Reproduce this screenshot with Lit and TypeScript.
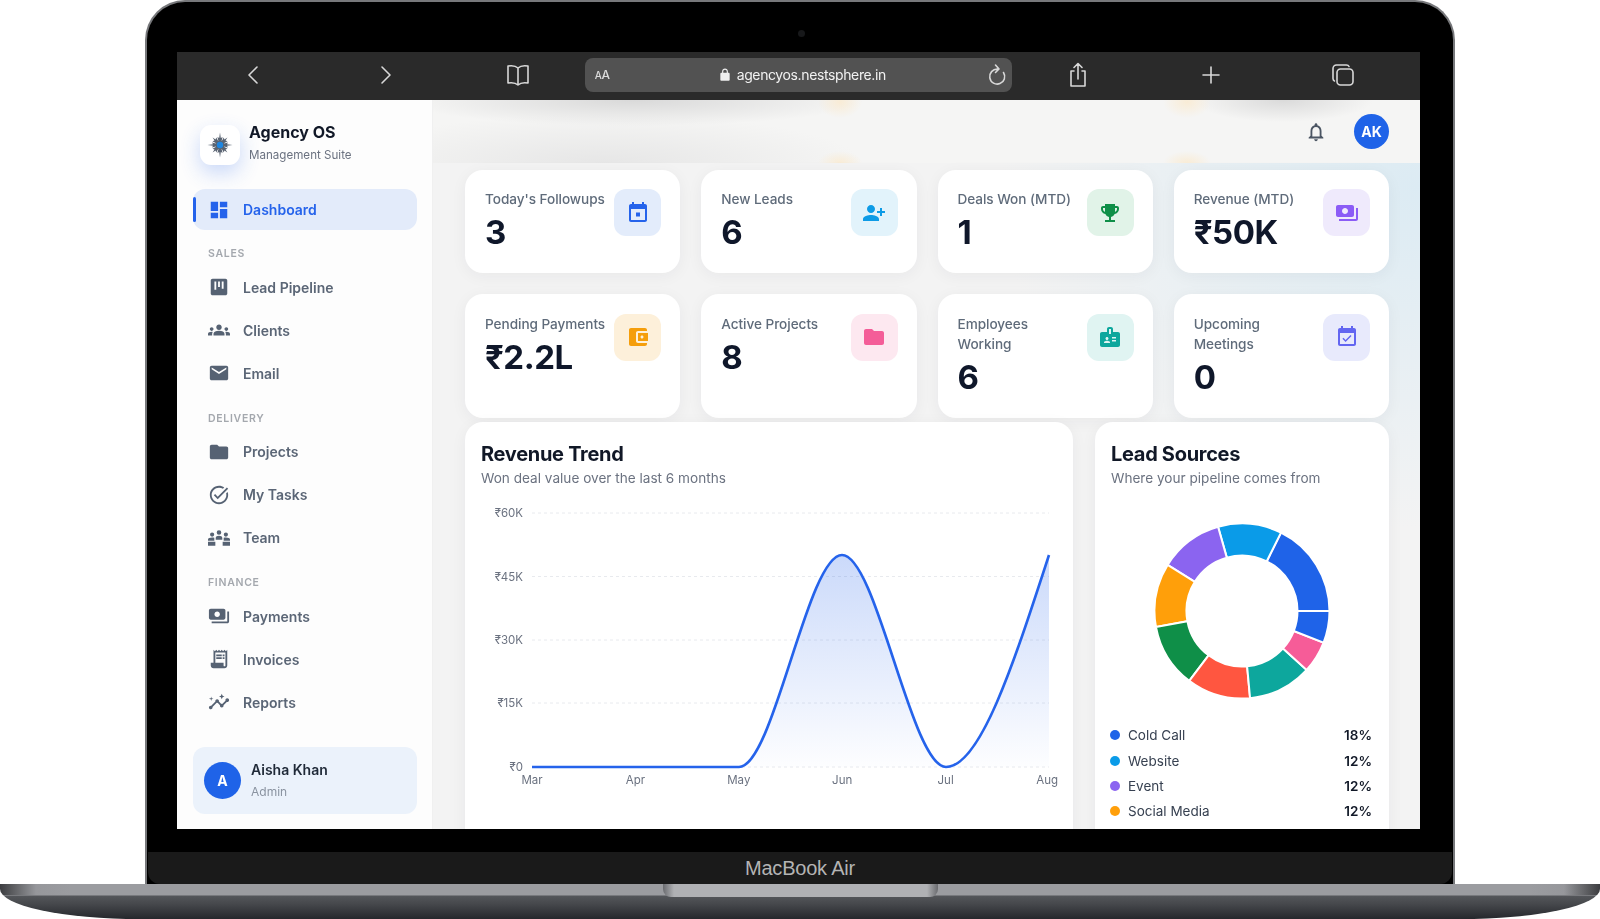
import { LitElement, html, css, svg } from 'lit';
import { customElement } from 'lit/decorators.js';

// material style glyphs, 24 box
const ICONS: Record<string, string> = {
  dashboard: 'M3 13h8V3H3v10zm0 8h8v-6H3v6zm10 0h8V11h-8v10zm0-18v6h8V3h-8z',
  kanban: 'M19 3H5c-1.1 0-2 .9-2 2v14c0 1.1.9 2 2 2h14c1.1 0 2-.9 2-2V5c0-1.1-.9-2-2-2zM9 15H7V6h2v9zm4-3h-2V6h2v6zm4 2h-2V6h2v8z',
  groups: 'M12 12.75c1.63 0 3.07.39 4.24.9 1.08.48 1.76 1.56 1.76 2.73V18H6v-1.61c0-1.18.68-2.26 1.76-2.73 1.17-.52 2.61-.91 4.24-.91zM4 13c1.1 0 2-.9 2-2s-.9-2-2-2-2 .9-2 2 .9 2 2 2zm1.13 1.1c-.37-.06-.74-.1-1.13-.1-.99 0-1.93.21-2.78.58C.48 14.9 0 15.62 0 16.43V18h4.5v-1.61c0-.83.23-1.61.63-2.29zM20 13c1.1 0 2-.9 2-2s-.9-2-2-2-2 .9-2 2 .9 2 2 2zm4 3.43c0-.81-.48-1.53-1.22-1.85-.85-.37-1.79-.58-2.78-.58-.39 0-.76.04-1.13.1.4.68.63 1.46.63 2.29V18H24v-1.57zM12 6c1.66 0 3 1.34 3 3s-1.34 3-3 3-3-1.34-3-3 1.34-3 3-3z',
  mail: 'M20 4H4c-1.1 0-1.99.9-1.99 2L2 18c0 1.1.9 2 2 2h16c1.1 0 2-.9 2-2V6c0-1.1-.9-2-2-2zm0 4l-8 5-8-5V6l8 5 8-5v2z',
  folder: 'M10 4H4c-1.1 0-1.99.9-1.99 2L2 18c0 1.1.9 2 2 2h16c1.1 0 2-.9 2-2V8c0-1.1-.9-2-2-2h-8l-2-2z',
  task: 'M22 5.18L10.59 16.6l-4.24-4.24 1.41-1.41 2.83 2.83 10-10L22 5.18zm-2.21 5.04c.13.57.21 1.17.21 1.78 0 4.42-3.58 8-8 8s-8-3.58-8-8 3.58-8 8-8c1.58 0 3.04.46 4.28 1.25l1.44-1.44C16.1 2.67 14.13 2 12 2 6.48 2 2 6.48 2 12s4.48 10 10 10 10-4.48 10-10c0-1.19-.22-2.33-.6-3.39l-1.61 1.61z',
  team: 'M12 3.5a2.5 2.5 0 1 1 0 5 2.5 2.5 0 0 1 0-5zM4.5 6a2.3 2.3 0 1 1 0 4.6 2.3 2.3 0 0 1 0-4.6zm15 0a2.3 2.3 0 1 1 0 4.6 2.3 2.3 0 0 1 0-4.6zM12 9.5c2 0 3.6 1 3.6 2.4V14H8.400v-2.100c0-1.400 1.600-2.400 3.600-2.400zM0 13.500c0-1.300 2-2.100 4.500-2.100.9 0 1.700.1 2.400.3v3.300H0v-1.500zm24 0c0-1.300-2-2.100-4.500-2.100-.9 0-1.700.1-2.400.3v3.300H24v-1.500zM0 16h24v4.500H0V16zm8 0v4.500h8V16H8z',
  payments: 'M19 14V6c0-1.1-.9-2-2-2H3c-1.1 0-2 .9-2 2v8c0 1.1.9 2 2 2h14c1.1 0 2-.9 2-2zm-9-1c-1.660 0-3-1.340-3-3s1.340-3 3-3 3 1.340 3 3-1.340 3-3 3zm13-6v11c0 1.100-.9 2-2 2H4v-2h17V7h2z',
  receipt: 'M19.500 3.500L18 2l-1.500 1.500L15 2l-1.500 1.500L12 2l-1.500 1.500L9 2 7.500 3.500 6 2v14H3v3c0 1.660 1.340 3 3 3h12c1.660 0 3-1.340 3-3V2l-1.500 1.500zM19 19c0 .55-.45 1-1 1s-1-.45-1-1v-3H8V5h11v14zM9 7h6v2H9zM16 7h2v2h-2zM9 10h6v2H9zM16 10h2v2h-2z',
  insights: 'M21 8c-1.450 0-2.260 1.440-1.930 2.510l-3.550 3.560c-.3-.09-.74-.09-1.040 0l-2.550-2.550C12.270 10.450 11.460 9 10 9c-1.450 0-2.270 1.440-1.930 2.520l-4.560 4.550C2.440 15.740 1 16.550 1 18c0 1.100.9 2 2 2 1.450 0 2.260-1.440 1.930-2.510l4.550-4.560c.3.09.74.09 1.040 0l2.550 2.550C12.730 16.550 13.540 18 15 18c1.450 0 2.270-1.440 1.930-2.520l3.560-3.550c1.070.33 2.510-.48 2.510-1.930 0-1.100-.9-2-2-2zM15 9l.94-2.070L18 6l-2.060-.93L15 3l-.92 2.070L12 6l2.080.93zM3.500 11L4 9l2-.5L4 8l-.5-2L3 8l-2 .5L3 9z',
  event: 'M16 1v2H8V1H6v2H5c-1.110 0-1.990.9-1.990 2L3 19c0 1.100.89 2 2 2h14c1.100 0 2-.9 2-2V5c0-1.100-.9-2-2-2h-1V1h-2zm3 18H5V8h14v11zM10 11.500h4v4h-4z',
  personAdd: 'M9 12c2.210 0 4-1.790 4-4s-1.790-4-4-4-4 1.790-4 4 1.790 4 4 4zm9-2V7h2v3h3v2h-3v3h-2v-3h-3v-2h3zM9 14c2.670 0 8 1.340 8 4v2H1v-2c0-2.660 5.330-4 8-4z',
  trophy: 'M19 5h-2V3H7v2H5c-1.100 0-2 .9-2 2v1c0 2.550 1.920 4.630 4.390 4.940.63 1.500 1.980 2.630 3.610 2.960V19H7v2h10v-2h-4v-3.100c1.630-.33 2.980-1.460 3.610-2.960C19.080 12.630 21 10.550 21 8V7c0-1.100-.9-2-2-2zM5 8V7h2v3.820C5.840 10.400 5 9.300 5 8zm14 0c0 1.300-.84 2.400-2 2.820V7h2v1z',
  wallet: 'M21 18v1c0 1.100-.9 2-2 2H5c-1.110 0-2-.9-2-2V5c0-1.100.89-2 2-2h14c1.100 0 2 .9 2 2v1h-9c-1.110 0-2 .9-2 2v8c0 1.100.89 2 2 2h9zm-9-2h10V8H12v8zm4-2.500c-.83 0-1.500-.67-1.500-1.500s.67-1.500 1.500-1.500 1.500.67 1.500 1.500-.67 1.500-1.500 1.500z',
  badge: 'M20 7h-5V4c0-1.100-.9-2-2-2h-2c-1.100 0-2 .9-2 2v3H4c-1.100 0-2 .9-2 2v11c0 1.100.9 2 2 2h16c1.100 0 2-.9 2-2V9c0-1.100-.9-2-2-2zM9 12c.83 0 1.500.67 1.500 1.500S9.830 15 9 15s-1.500-.67-1.500-1.500S8.170 12 9 12zm3 6H6v-.75c0-1 2-1.500 3-1.500s3 .5 3 1.500V18zm1-9h-2V4h2v5zm5 7.500h-4V15h4v1.500zm0-3h-4V12h4v1.500z',
  eventOk: 'M16.530 11.060L15.470 10l-4.880 4.880-2.120-2.120-1.060 1.060L10.590 17l5.940-5.940zM19 3h-1V1h-2v2H8V1H6v2H5c-1.110 0-1.990.9-1.990 2L3 19c0 1.100.89 2 2 2h14c1.100 0 2-.9 2-2V5c0-1.100-.9-2-2-2zm0 16H5V8h14v11z',
  bell: 'M12 22c1.100 0 2-.9 2-2h-4c0 1.100.9 2 2 2zm6-6v-5c0-3.070-1.630-5.640-4.500-6.320V4c0-.83-.67-1.500-1.500-1.500s-1.500.67-1.500 1.500v.68C7.640 5.360 6 7.920 6 11v5l-2 2v1h16v-1l-2-2zm-2 1H8v-6c0-2.480 1.510-4.500 4-4.500s4 2.020 4 4.500v6z',
  lock: 'M18 8h-1V6c0-2.760-2.240-5-5-5S7 3.240 7 6v2H6c-1.100 0-2 .9-2 2v10c0 1.100.9 2 2 2h12c1.100 0 2-.9 2-2V10c0-1.100-.9-2-2-2zM9 6c0-1.660 1.340-3 3-3s3 1.340 3 3v2H9V6z',
};

const icon = (name: string, size = 22, color = 'currentColor') => html`
  <svg width=${size} height=${size} viewBox="0 0 24 24" fill=${color}>
    <path fill-rule="evenodd" d=${ICONS[name]}></path>
  </svg>
`;

const NAV = [
  { label: 'SALES', items: [['Lead Pipeline', 'kanban', 24], ['Clients', 'groups', 24], ['Email', 'mail', 24]] },
  { label: 'DELIVERY', items: [['Projects', 'folder', 24], ['My Tasks', 'task', 24], ['Team', 'team', 24]] },
  { label: 'FINANCE', items: [['Payments', 'payments', 24], ['Invoices', 'receipt', 22], ['Reports', 'insights', 24]] },
] as const;

const STATS = [
  { label: ["Today's Followups"], value: '3', icon: 'event', color: '#2563eb', bg: '#e3ecfb' },
  { label: ['New Leads'], value: '6', icon: 'personAdd', color: '#0d9be6', bg: '#e2f3fb' },
  { label: ['Deals Won (MTD)'], value: '1', icon: 'trophy', color: '#0f8f48', bg: '#e1f3e8' },
  { label: ['Revenue (MTD)'], value: '₹50K', icon: 'payments', color: '#8b5cf6', bg: '#efeafc' },
  { label: ['Pending Payments'], value: '₹2.2L', icon: 'wallet', color: '#f59e0b', bg: '#fdf0da' },
  { label: ['Active Projects'], value: '8', icon: 'folder', color: '#f45d98', bg: '#fde8f0' },
  { label: ['Employees', 'Working'], value: '6', icon: 'badge', color: '#0da79d', bg: '#e0f4f2' },
  { label: ['Upcoming', 'Meetings'], value: '0', icon: 'eventOk', color: '#6366f1', bg: '#e8eafc' },
];

const SOURCES = [
  { name: 'Cold Call', pct: 18, n: 3, color: '#1f63e8' },
  { name: 'Website', pct: 12, n: 2, color: '#0a9be8' },
  { name: 'Event', pct: 12, n: 2, color: '#8b64f0' },
  { name: 'Social Media', pct: 12, n: 2, color: '#ff9f0a' },
  { name: '', pct: 12, n: 2, color: '#0f8f48' },
  { name: '', pct: 12, n: 2, color: '#ff5640' },
  { name: '', pct: 12, n: 2, color: '#0da79d' },
  { name: '', pct: 6, n: 1, color: '#f65c98' },
  { name: '', pct: 6, n: 1, color: '#1f63e8' },
];

// slices run counter clockwise from east
function slices() {
  const total = SOURCES.reduce((s, x) => s + x.n, 0);
  const R = 87.5;
  const r = 55.5;
  let a = 0;
  return SOURCES.map((s) => {
    const b = a + (s.n / total) * Math.PI * 2;
    const p = (rad: number, t: number) => `${(rad * Math.cos(t)).toFixed(2)} ${(-rad * Math.sin(t)).toFixed(2)}`;
    const large = b - a > Math.PI ? 1 : 0;
    const d = `M${p(R, a)} A${R} ${R} 0 ${large} 0 ${p(R, b)} L${p(r, b)} A${r} ${r} 0 ${large} 1 ${p(r, a)} Z`;
    a = b;
    return svg`<path d=${d} fill=${s.color} stroke="#fff" stroke-width="2"></path>`;
  });
}

const GRID = [
  { y: 17, t: '₹60K' },
  { y: 80.5, t: '₹45K' },
  { y: 144, t: '₹30K' },
  { y: 207, t: '₹15K' },
  { y: 271, t: '₹0' },
];
const MONTHS = ['Mar', 'Apr', 'May', 'Jun', 'Jul', 'Aug'];
// monotone spline through May, Jun, Jul, Aug
const CURVE = 'M67 271 L274 271 C308.5 271 342.5 59 377 59 C411.5 59 446.5 271 481 271 C515.5 271 549.5 165 584 59';

@customElement('app-root')
export class AppRoot extends LitElement {
  static styles = css`
    :host {
      display: block;
      width: 1600px;
      height: 919px;
      overflow: hidden;
      background: #fff;
      font-family: Inter, "Noto Sans", sans-serif;
    }

    .lid {
      box-sizing: border-box;
      width: 1310px;
      height: 884px;
      margin: 0 auto 0 145px;
      border: 2px solid #77787b;
      border-bottom: none;
      border-radius: 40px 40px 0 0;
      background: #000;
      display: flex;
      flex-direction: column;
      padding: 0 33px 0 30px;
    }
    .cam {
      height: 50px;
      flex: none;
      display: flex;
      align-items: center;
      justify-content: center;
      padding: 12px 0 0 6px;
      box-sizing: border-box;
    }
    .cam i {
      width: 7px;
      height: 7px;
      border-radius: 50%;
      background: #17181a;
    }
    .chin {
      flex: none;
      height: 32px;
      margin: 23px -32px 0 -29px;
      background: #1a1a1a;
      border-radius: 0 0 12px 12px;
      color: #b4b4b4;
      font: 20px "Liberation Sans", sans-serif;
      letter-spacing: -0.2px;
      display: flex;
      align-items: center;
      justify-content: center;
    }

    .base {
      height: 35px;
      background:
        linear-gradient(90deg, #3c3d40 0, #96979b 36px, transparent 70px, transparent 1530px, #96979b 1564px, #3c3d40 100%) 0 0 / 100% 11px no-repeat,
        linear-gradient(#9b9ca0 0 11px, #54565a 12px, #46484c 20px, #25272c 100%);
      border-radius: 0 0 140px 140px / 0 0 30px 30px;
    }
    .notch {
      width: 275px;
      height: 13px;
      margin: 0 auto;
      border-radius: 0 0 8px 8px;
      background: linear-gradient(90deg, #6a6b6f, #b0b1b4 4%, #b0b1b4 96%, #6a6b6f);
    }

    .screen {
      flex: none;
      height: 777px;
      overflow: hidden;
      display: flex;
      flex-direction: column;
      filter: blur(0.55px);
    }

    .toolbar {
      flex: none;
      height: 48px;
      box-sizing: border-box;
      padding: 0 0 3px 10px;
      background: #2a2a2a;
      display: grid;
      grid-template-columns: repeat(3, 132.6px) 427px repeat(3, 132.6px);
      align-items: center;
      justify-items: center;
      color: #dcdcdc;
    }
    .toolbar svg {
      display: block;
      fill: none;
      stroke: #d8d8d8;
      stroke-width: 1.6;
      stroke-linecap: round;
      stroke-linejoin: round;
    }
    .url {
      width: 427px;
      height: 34px;
      border-radius: 8px;
      background: #525252;
      display: grid;
      grid-template-columns: 1fr auto 1fr;
      align-items: center;
      padding: 0 3px 0 10px;
      box-sizing: border-box;
    }
    .aa {
      font-size: 12px;
      font-weight: 500;
      letter-spacing: -0.5px;
    }
    .aa small {
      font-size: 10px;
    }
    .addr {
      display: flex;
      align-items: center;
      gap: 5px;
      font-size: 14px;
      letter-spacing: -0.38px;
      color: #f2f2f2;
    }
    .addr svg {
      fill: #eee;
      stroke: none;
    }
    .url .reload {
      justify-self: end;
    }

    .app {
      flex: 1;
      min-height: 0;
      display: flex;
    }

    .side {
      flex: none;
      width: 256px;
      box-sizing: border-box;
      background: #fdfdfd;
      border-right: 1px solid #f0f0f0;
      padding: 25px 15px 15px 16px;
      display: flex;
      flex-direction: column;
    }
    .brand {
      display: flex;
      gap: 9px;
      height: 40px;
      padding-left: 7px;
      margin-bottom: 24px;
    }
    .logo {
      width: 40px;
      height: 40px;
      flex: none;
      border-radius: 11px;
      background: #fff;
      box-shadow: 0 8px 20px rgba(37, 99, 235, 0.24);
      display: flex;
      align-items: center;
      justify-content: center;
    }
    .brand b {
      display: block;
      font-size: 16px;
      font-weight: 700;
      line-height: 20px;
      margin-top: -3px;
      color: #111827;
    }
    .brand span {
      display: block;
      font-size: 11.6px;
      line-height: 16px;
      margin-top: 5px;
      color: #6b7280;
    }
    .item {
      height: 43px;
      display: flex;
      align-items: center;
      gap: 13px;
      padding-left: 15px;
      font-size: 14px;
      font-weight: 600;
      color: #5b6676;
    }
    .item .ic {
      width: 22px;
      display: flex;
      justify-content: center;
      flex: none;
    }
    .item.on {
      position: relative;
      height: 41px;
      border-radius: 12px;
      background: #e3ebfa;
      color: #2563eb;
    }
    .item.on::before {
      content: '';
      position: absolute;
      left: 0;
      top: 8px;
      bottom: 8px;
      width: 3px;
      border-radius: 2px;
      background: #2563eb;
    }
    .sec {
      height: 16px;
      line-height: 16px;
      margin: 16px 0 3.5px;
      padding-left: 15px;
      font-size: 10.5px;
      font-weight: 600;
      letter-spacing: 0.7px;
      color: #a4a8ae;
    }
    .me {
      margin-top: auto;
      height: 67px;
      border-radius: 12px;
      background: #ebf2fb;
      display: flex;
      align-items: center;
      gap: 10px;
      padding-left: 11px;
    }
    .me .av {
      width: 37px;
      height: 37px;
      border-radius: 50%;
      background: #1f63e8;
      color: #fff;
      font-size: 14px;
      font-weight: 700;
      display: flex;
      align-items: center;
      justify-content: center;
    }
    .me b {
      display: block;
      font-size: 14px;
      font-weight: 600;
      line-height: 18px;
      color: #1f2937;
    }
    .me span {
      display: block;
      font-size: 12px;
      line-height: 16px;
      margin-top: 5px;
      color: #8a93a0;
    }

    .main {
      flex: 1;
      min-width: 0;
      overflow: hidden;
      background:
        radial-gradient(420px 340px at 100% 12%, #dcebf3, transparent),
        #f3f3f3;
    }
    .top {
      height: 63px;
      box-sizing: border-box;
      background:
        radial-gradient(22px 16px at 407px 2px, #f9ecd6, transparent),
        radial-gradient(22px 12px at 407px 63px, #f9ecd6, transparent),
        radial-gradient(24px 16px at 754px 2px, #f9ecd6, transparent),
        radial-gradient(24px 12px at 754px 63px, #f9ecd6, transparent),
        radial-gradient(230px 26px at 200px 0, #d9d9d9, transparent),
        radial-gradient(90px 22px at 850px 0, #dadada, transparent),
        radial-gradient(260px 50px at 170px 64px, #e6e6e6, transparent),
        #f5f5f4;
      display: flex;
      align-items: center;
      justify-content: flex-end;
      gap: 27px;
      padding-right: 31px;
      color: #4b5563;
    }
    .top .av {
      width: 35px;
      height: 35px;
      border-radius: 50%;
      background: #1f63e8;
      color: #fff;
      font-size: 14px;
      font-weight: 700;
      display: flex;
      align-items: center;
      justify-content: center;
    }

    .body {
      padding: 7px 31px 0 32px;
    }
    .stats {
      display: grid;
      grid-template-columns: repeat(4, 1fr);
      gap: 20.5px 21px;
    }
    .card {
      background: #fff;
      border-radius: 18px;
      box-shadow: 0 3px 16px rgba(30, 40, 60, 0.05);
    }
    .stat {
      padding: 19px 19px 18px 20px;
      display: flex;
      justify-content: space-between;
    }
    .stat:nth-child(n + 5) {
      padding-top: 20px;
    }
    .stat .lb {
      font-size: 13.6px;
      font-weight: 500;
      line-height: 20px;
      letter-spacing: -0.05px;
      white-space: nowrap;
      color: #5f6b7a;
    }
    .stat .val {
      font-size: 33px;
      font-weight: 700;
      line-height: 45px;
      margin-top: 1px;
      letter-spacing: -0.5px;
      color: #0f172a;
    }
    .stat .box {
      width: 47px;
      height: 47px;
      flex: none;
      border-radius: 12px;
      display: flex;
      align-items: center;
      justify-content: center;
    }

    .charts {
      display: grid;
      grid-template-columns: 608px 294px;
      gap: 22px;
      margin-top: 4px;
    }
    .panel {
      height: 440px;
      padding-top: 20px;
      box-sizing: border-box;
    }
    .head {
      padding: 0 16px;
    }
    .panel h3 {
      margin: 0;
      font-size: 20px;
      font-weight: 700;
      line-height: 24px;
      letter-spacing: -0.3px;
      color: #111827;
    }
    .panel p {
      margin: 2px 0 0;
      font-size: 13.6px;
      line-height: 20px;
      color: #6b7280;
    }
    .trend {
      display: block;
      margin-top: 8px;
    }
    .trend text {
      font-family: Inter, sans-serif;
      font-size: 11.5px;
      fill: #6b7280;
    }
    .donut {
      display: block;
      margin: 33px auto 22px;
    }
    .legend {
      padding: 0 17px 0 15px;
    }
    .row {
      height: 25.4px;
      display: flex;
      align-items: center;
      font-size: 13.5px;
      color: #374151;
    }
    .row i {
      width: 10px;
      height: 10px;
      border-radius: 50%;
      margin-right: 8px;
    }
    .row b {
      margin-left: auto;
      font-weight: 600;
      color: #111827;
    }
  `;

  private renderToolbar() {
    return html`
      <div class="toolbar">
        <svg width="14" height="22" viewBox="0 0 14 22"><path d="M11 3 3 11l8 8"></path></svg>
        <svg width="14" height="22" viewBox="0 0 14 22"><path d="m3 3 8 8-8 8"></path></svg>
        <svg width="26" height="24" viewBox="0 0 26 24">
          <path d="M13 5c-2-2-6-2.600-10-2v17c4-.6 8 0 10 2 2-2 6-2.600 10-2V3c-4-.6-8 0-10 2zM13 5v17"></path>
        </svg>
        <div class="url">
          <span class="aa"><small>A</small>A</span>
          <span class="addr">${icon('lock', 14)}agencyos.nestsphere.in</span>
          <svg class="reload" width="22" height="24" viewBox="0 0 22 24">
            <path d="M16.500 9.500a7.500 7.500 0 1 1-6-3.400M8.500 2l3.500 4-3.500 3.500"></path>
          </svg>
        </div>
        <svg width="20" height="28" viewBox="0 0 20 28">
          <path d="M6 10H3v15h14V10h-3M10 18V3M6 6.500 10 2.500l4 4"></path>
        </svg>
        <svg width="20" height="20" viewBox="0 0 20 20"><path d="M10 2v16M2 10h16"></path></svg>
        <svg width="24" height="24" viewBox="0 0 24 24">
          <rect x="6" y="6" width="16" height="16" rx="3.500"></rect>
          <path d="M18 3.500c-.4-.9-1.200-1.500-2.500-1.500H5.500C3.500 2 2 3.500 2 5.500v10c0 1.300.6 2.100 1.500 2.500"></path>
        </svg>
      </div>
    `;
  }

  private renderSide() {
    return html`
      <aside class="side">
        <div class="brand">
          <div class="logo">
            <svg width="26" height="26" viewBox="-13 -13 26 26">
              ${[0, 45, 90, 135, 180, 225, 270, 315].map(
                (a) => svg`<path transform="rotate(${a})" d="M-1.300 -3 L-2.600 -8 L-.8 -7 L0 -${a % 90 ? 10.500 : 12.500} L.8 -7 L2.600 -8 L1.300 -3 Z" fill="#5a6472"></path>`
              )}
              <circle r="4.400" fill="#5a6472"></circle>
              <circle r="3.200" fill="#1f86e0"></circle>
            </svg>
          </div>
          <div><b>Agency OS</b><span>Management Suite</span></div>
        </div>
        <div class="item on"><span class="ic">${icon('dashboard', 24)}</span>Dashboard</div>
        ${NAV.map(
          (g) => html`
            <div class="sec">${g.label}</div>
            ${g.items.map(
              ([name, ic, size]) =>
                html`<div class="item"><span class="ic">${icon(ic, size, '#566273')}</span>${name}</div>`
            )}
          `
        )}
        <div class="me">
          <div class="av">A</div>
          <div><b>Aisha Khan</b><span>Admin</span></div>
        </div>
      </aside>
    `;
  }

  private renderTrend() {
    return html`
      <svg class="trend" width="608" height="320" viewBox="0 0 608 320">
        <defs>
          <linearGradient id="area" x1="0" y1="0" x2="0" y2="1">
            <stop offset="0" stop-color="#2563eb" stop-opacity="0.24"></stop>
            <stop offset="1" stop-color="#2563eb" stop-opacity="0.01"></stop>
          </linearGradient>
        </defs>
        ${GRID.map(
          (g) => svg`
            <line x1="67" x2="584" y1=${g.y} y2=${g.y} stroke="#e8eaee" stroke-dasharray="3 3"></line>
            <text x="58" y=${g.y + 4} text-anchor="end">${g.t}</text>
          `
        )}
        ${MONTHS.map(
          (m, i) => svg`<text x=${67 + i * 103.4} y="288" text-anchor=${i === 5 ? 'end' : 'middle'} dx=${i === 5 ? 9 : 0}>${m}</text>`
        )}
        <path d="${CURVE} L584 271 Z" fill="url(#area)"></path>
        <path d=${CURVE} fill="none" stroke="#2563eb" stroke-width="2.600"></path>
      </svg>
    `;
  }

  render() {
    return html`
      <div class="lid">
        <div class="cam"><i></i></div>
        <div class="screen">
          ${this.renderToolbar()}
          <div class="app">
            ${this.renderSide()}
            <main class="main">
              <div class="top">
                ${icon('bell', 22, '#4b5563')}
                <div class="av">AK</div>
              </div>
              <div class="body">
                <div class="stats">
                  ${STATS.map(
                    (s) => html`
                      <div class="card stat">
                        <div>
                          <div class="lb">${s.label.map((l) => html`${l}<br />`)}</div>
                          <div class="val">${s.value}</div>
                        </div>
                        <div class="box" style="background:${s.bg}">${icon(s.icon, 24, s.color)}</div>
                      </div>
                    `
                  )}
                </div>
                <div class="charts">
                  <div class="card panel">
                    <div class="head">
                      <h3>Revenue Trend</h3>
                      <p>Won deal value over the last 6 months</p>
                    </div>
                    ${this.renderTrend()}
                  </div>
                  <div class="card panel">
                    <div class="head">
                      <h3>Lead Sources</h3>
                      <p>Where your pipeline comes from</p>
                    </div>
                    <svg class="donut" width="180" height="180" viewBox="-90 -90 180 180">${slices()}</svg>
                    <div class="legend">
                      ${SOURCES.filter((s) => s.name).map(
                        (s) => html`<div class="row"><i style="background:${s.color}"></i>${s.name}<b>${s.pct}%</b></div>`
                      )}
                    </div>
                  </div>
                </div>
              </div>
            </main>
          </div>
        </div>
        <div class="chin">MacBook Air</div>
      </div>
      <div class="base"><div class="notch"></div></div>
    `;
  }
}
